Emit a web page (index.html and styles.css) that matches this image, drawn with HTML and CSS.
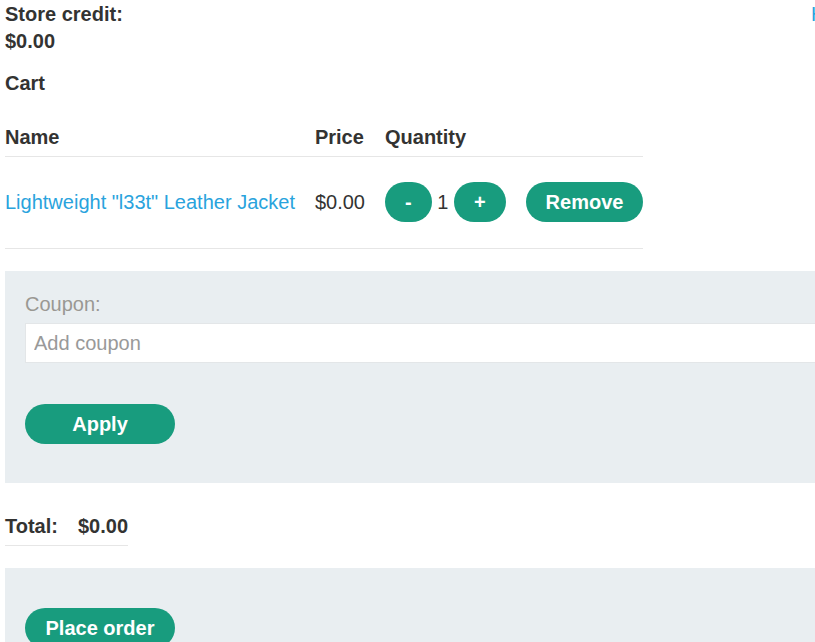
FILE: index.html
```html
<!DOCTYPE html>
<html lang="en">
<head>
<meta charset="utf-8">
<title>Cart</title>
<link rel="stylesheet" href="styles.css">
</head>
<body>
<div class="page">
  <div class="top">
    <p class="credit">Store credit:<br>$0.00</p>
    <nav class="nav">
      <a href="#">Home</a><span class="sep">|</span><a href="#">My account</a><span class="sep">|</span><a href="#">Cart</a>
    </nav>
  </div>
  <p class="cart-title">Cart</p>
  <table class="grid cart-table">
    <thead>
      <tr>
        <th>Name</th>
        <th>Price</th>
        <th>Quantity</th>
        <th></th>
      </tr>
    </thead>
    <tbody>
      <tr>
        <td><a href="#">Lightweight "l33t" Leather Jacket</a></td>
        <td>$0.00</td>
        <td class="qty"><button class="btn">-</button> 1 <button class="btn">+</button></td>
        <td><button class="btn">Remove</button></td>
      </tr>
    </tbody>
  </table>
  <form class="panel coupon">
    <label class="coupon-label" for="coupon">Coupon:</label>
    <input class="coupon-input" id="coupon" type="text" placeholder="Add coupon">
    <button class="btn btn-wide apply" type="button">Apply</button>
  </form>
  <table class="grid total-table">
    <tbody>
      <tr>
        <th>Total:</th>
        <th>$0.00</th>
      </tr>
    </tbody>
  </table>
  <form class="panel order">
    <button class="btn btn-wide" type="button">Place order</button>
  </form>
</div>
</body>
</html>
```
FILE: styles.css
```css
html {
  overflow: hidden;
}

body {
  margin: 0;
  padding-top: 1px;
  font-family: "Liberation Sans", Arial, Helvetica, sans-serif;
  font-size: 20px;
  line-height: 27px;
  color: #333332;
  background: #ffffff;
}

a {
  color: #29a3dd;
  text-decoration: none;
}

.page {
  width: 1100px;
  padding-left: 5px;
}

.top {
  display: flex;
  align-items: flex-start;
}

.credit {
  margin: 0;
  width: 806px;
  font-weight: bold;
}

.nav {
  display: flex;
  gap: 8px;
}

.sep {
  color: #333332;
}

.cart-title {
  margin: 15px 0 0;
  font-weight: bold;
}

.grid {
  border-collapse: collapse;
  border-spacing: 0;
}

.grid th,
.grid td {
  text-align: left;
  padding: 5px 20px 5px 0;
  border-bottom: 1px solid #e6e6e6;
  font-weight: bold;
  white-space: nowrap;
}

.grid td {
  font-weight: normal;
  padding-top: 25px;
  padding-bottom: 26px;
  vertical-align: middle;
}

.grid th:last-child,
.grid td:last-child {
  padding-right: 0;
}

.cart-table {
  margin-top: 22px;
}

.btn {
  display: inline-block;
  vertical-align: baseline;
  box-sizing: border-box;
  height: 40px;
  padding: 0 20px;
  border: none;
  border-radius: 20px;
  background: #189c7e;
  color: #ffffff;
  font-family: inherit;
  font-size: 20px;
  font-weight: bold;
  line-height: 40px;
  text-align: center;
  cursor: pointer;
}

.btn-wide {
  min-width: 150px;
}

.panel {
  margin: 0;
  background: #e9eef1;
}

.coupon {
  margin-top: 22px;
  padding: 20px 20px 39px;
}

.coupon-label {
  display: block;
  color: #9a9893;
}

.coupon-input {
  display: block;
  box-sizing: border-box;
  width: 100%;
  height: 40px;
  margin-top: 5px;
  padding: 0 8px;
  border: 1px solid #e3e6e8;
  background: #ffffff;
  font-family: inherit;
  font-size: 20px;
  color: #333332;
  outline: none;
}

.coupon-input::placeholder {
  color: #999999;
}

.apply {
  display: block;
  margin-top: 41px;
}

.total-table {
  margin-top: 25px;
}

.order {
  margin-top: 22px;
  padding: 40px 20px 40px;
}
```
